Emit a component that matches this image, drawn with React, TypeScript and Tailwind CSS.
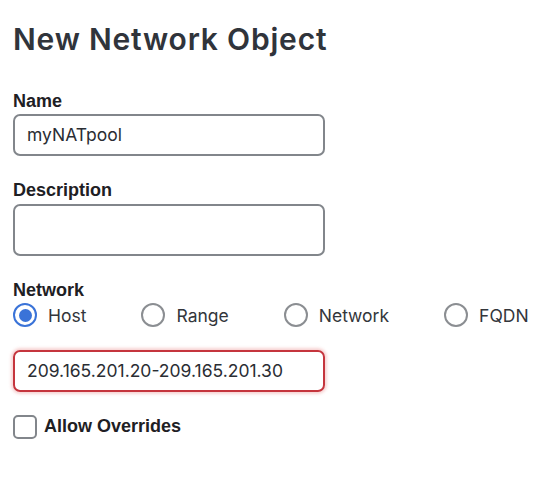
import { useState } from 'react';

const TYPES = ['Host', 'Range', 'Network', 'FQDN'];

export default function App() {
  const [type, setType] = useState('Host');
  const [allow, setAllow] = useState(false);

  return (
    <div className="min-h-screen bg-white pl-[13px] font-['Inter',sans-serif] text-[#2a2d33]">
      <h1 className="pt-[21px] text-[30px] leading-[36px] font-semibold tracking-[0.8px] text-[#30343b]">New Network Object</h1>

      <label className="mt-[34px] block font-['Liberation_Sans',Arial,sans-serif] text-[18px] leading-[20px] font-bold text-[#1e2024]">
        Name
      </label>
      <div className="mt-[3px] flex h-[42px] w-[312px] items-center rounded-[7px] border-2 border-[#82868b] px-3 text-[17.5px]">
        myNATpool
      </div>

      <label className="mt-[24px] block font-['Liberation_Sans',Arial,sans-serif] text-[18px] leading-[20px] font-bold text-[#1e2024]">
        Description
      </label>
      <div className="mt-[4px] h-[52px] w-[312px] rounded-[7px] border-2 border-[#82868b]" />

      <label className="mt-[24px] block font-['Liberation_Sans',Arial,sans-serif] text-[18px] leading-[20px] font-bold text-[#1e2024]">
        Network
      </label>
      <div className="mt-[3px] flex h-[24px] items-center gap-[55px]">
        {TYPES.map((t) => (
          <button key={t} onClick={() => setType(t)} className="flex items-center gap-[11px] text-[17.5px] leading-[24px] text-[#33363b]">
            {type === t ? (
              <span className="flex h-[24px] w-[24px] items-center justify-center rounded-full border-2 border-[#3a73d8]">
                <span className="h-[13px] w-[13px] rounded-full bg-[#3a73d8]" />
              </span>
            ) : (
              <span className="h-[24px] w-[24px] rounded-full border-2 border-[#8b8e92]" />
            )}
            <span className="pt-[2px]">{t}</span>
          </button>
        ))}
      </div>

      <div className="mt-[23px] flex h-[42px] w-[312px] items-center rounded-[7px] border-2 border-[#c5353d] px-3 text-[17.5px] shadow-[0_0_3px_2px_rgba(230,110,110,0.3)]">
        209.165.201.20-209.165.201.30
      </div>

      <button onClick={() => setAllow(!allow)} className="mt-[21px] flex items-center gap-[7px]">
        <span className="h-[24px] w-[24px] rounded-[5px] border-2 border-[#82868b]" />
        <span className="font-['Liberation_Sans',Arial,sans-serif] text-[18px] font-bold text-[#1e2024]">Allow Overrides</span>
      </button>
    </div>
  );
}
